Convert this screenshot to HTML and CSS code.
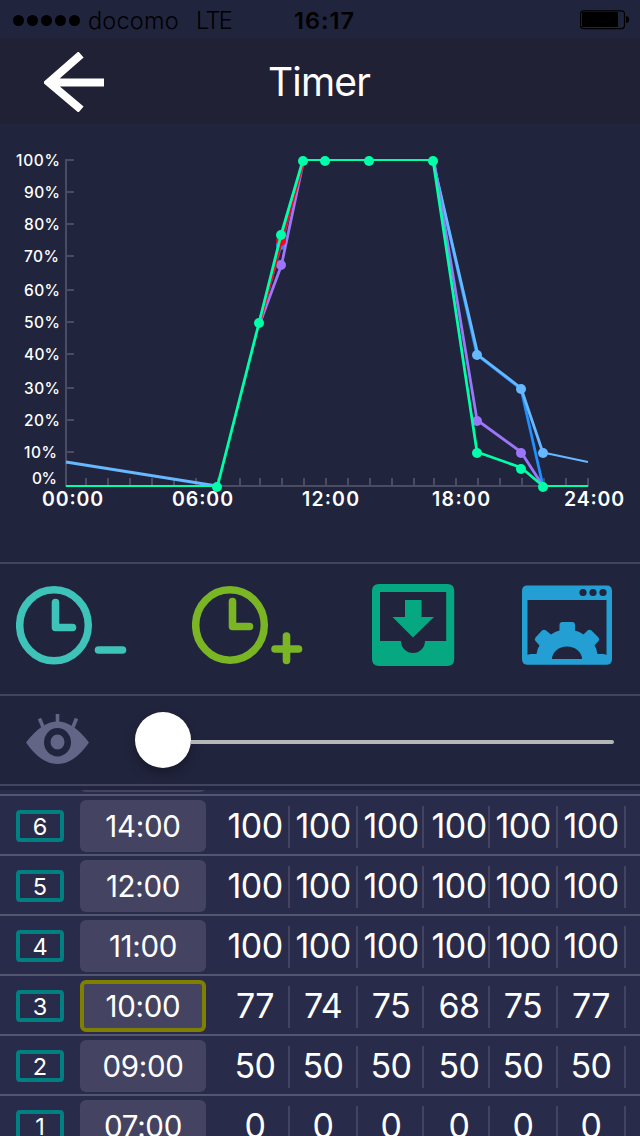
FILE: index.html
```html
<!DOCTYPE html>
<html>
<head>
<meta charset="utf-8">
<title>Timer</title>
<link rel="stylesheet" href="styles.css">
</head>
<body>

<div id="status">
    <div class="signal"><i></i><i></i><i></i><i></i><i></i></div>
    <span class="carrier">docomo</span>
    <span class="network">LTE</span>
    <b class="clock">16:17</b>
    <svg class="battery" width="50" height="20" viewBox="0 0 50 20">
        <rect x="0.5" y="0.8" width="44" height="17.8" rx="3" fill="none" stroke="#000" stroke-width="1.2"/>
        <rect x="2" y="2" width="36" height="15" rx="1"/>
        <path d="M46 6q3 0 3 3.5t-3 3.5z"/>
    </svg>
</div>

<header>
    <svg class="back" width="60" height="60" viewBox="0 0 60 60">
        <path d="M60 30.500H6M37 2.500L5 30.500L37 57.500" fill="none" stroke="#FFF" stroke-width="8"/>
    </svg>
    <h1>Timer</h1>
</header>

<svg class="chart" width="640" height="438" viewBox="0 124 640 438">
    <path class="axis" d="M66 159V487M65 486H589"/>
    <path class="axis" d="M66 160h8M66 192h8M66 224h8M66 256h8M66 290h8M66 322h8M66 354h8M66 388h8M66 420h8M66 452h8"/>
    <path class="axis" d="M86 478v8M108 478v8M130 478v8M152 478v8M174 478v8M196 478v8M218 478v8M240 478v8M260 478v8M282 478v8M304 478v8M326 478v8M348 478v8M370 478v8M392 478v8M414 478v8M434 478v8M456 478v8M478 478v8M500 478v8M522 478v8M544 478v8M566 478v8M588 478v8"/>

    <g class="ylabel">
        <text x="16" y="166" textLength="44">100%</text>
        <text x="24" y="198" textLength="36">90%</text>
        <text x="24" y="230" textLength="36">80%</text>
        <text x="24" y="262" textLength="35">70%</text>
        <text x="24" y="296" textLength="36">60%</text>
        <text x="24" y="328" textLength="36">50%</text>
        <text x="24" y="360" textLength="36">40%</text>
        <text x="24" y="394" textLength="36">30%</text>
        <text x="24" y="426" textLength="36">20%</text>
        <text x="24" y="458" textLength="33">10%</text>
        <text x="32" y="484" textLength="25">0%</text>
    </g>
    <g class="xlabel">
        <text x="42" y="506" textLength="61">00:00</text>
        <text x="172" y="506" textLength="61">06:00</text>
        <text x="302" y="506" textLength="57">12:00</text>
        <text x="432" y="506" textLength="58">18:00</text>
        <text x="564" y="506" textLength="60">24:00</text>
    </g>

    <g class="line blue">
        <path d="M259 323L281 245L303 161M433 161L477 355L521 389L543 486"/>
        <circle cx="281" cy="245" r="5"/>
    </g>
    <g class="line sky">
        <path d="M66 462L217 486M433 161L478 355L521 388L543 453"/>
        <path class="thin" d="M543 452.500L588 462"/>
        <circle cx="477" cy="355" r="5"/><circle cx="521" cy="389" r="5"/><circle cx="543" cy="453" r="5"/>
    </g>
    <g class="line violet">
        <path d="M260 323L281.500 265L303.500 161M434 161L477 420L521 452L543 486"/>
        <circle cx="281" cy="265" r="5"/><circle cx="477" cy="421" r="5"/><circle cx="521" cy="453" r="5"/>
    </g>
    <g class="line red">
        <path class="thin" d="M260 323L282 241L303 165"/>
        <circle cx="281" cy="241" r="5"/>
    </g>
    <g class="line green">
        <path d="M217.500 486L259 323L281 235L303 160M433 160L477 452L521 467.500L543 486"/>
        <path class="thin" d="M66 486H217M303 160H433M543 486H588"/>
        <circle cx="217" cy="487" r="5"/><circle cx="259" cy="323" r="5"/><circle cx="281" cy="235" r="5"/>
        <circle cx="303" cy="161" r="5"/><circle cx="325" cy="161" r="5"/><circle cx="369" cy="161" r="5"/>
        <circle cx="433" cy="161" r="5"/><circle cx="477" cy="453" r="5"/><circle cx="521" cy="469" r="5"/>
        <circle cx="543" cy="487" r="5"/>
    </g>
</svg>

<div id="tools">
    <!-- remove time -->
    <svg width="176" height="84" viewBox="0 0 176 84">
        <g fill="none" stroke="#3EC3B8" stroke-width="7.500" stroke-linecap="round" stroke-linejoin="round">
            <ellipse cx="38" cy="42.300" rx="34.300" ry="35.500"/>
            <path d="M39.500 19.500V44.500H56.500M82.500 67H106.500" stroke-width="7.600"/>
        </g>
    </svg>
    <!-- add time -->
    <svg width="180" height="84" viewBox="0 0 180 84">
        <g fill="none" stroke="#7AB524" stroke-width="7.500" stroke-linecap="round" stroke-linejoin="round">
            <ellipse cx="38" cy="42" rx="34.300" ry="35.200"/>
            <path d="M40.500 18.500V43.500H57.500M83 66H106.500M94.500 53V77.500" stroke-width="7.600"/>
        </g>
    </svg>
    <!-- save -->
    <svg width="150" height="84" viewBox="0 0 150 84">
        <path fill="#05A880" fill-rule="evenodd" d="M7 1H75.500Q82.200 1 82.200 8V76Q82.200 83 75.500 83H7Q0 83 0 76V8Q0 1 7 1ZM8 9V58H29A12 12 0 0 0 53 58H74.200V9Z"/>
        <path fill="#05A880" d="M33 17H49.500V34H62L41 54.500L20.500 34H33Z"/>
    </svg>
    <!-- settings -->
    <svg width="90" height="84" viewBox="0 0 90 84">
        <path fill="#239FD4" fill-rule="evenodd" d="M5 2.500H85Q90 2.500 90 8V76Q90 81.700 85 81.700H5Q0 81.700 0 76V8Q0 2.500 5 2.500ZM5.500 17V72Q7 71 9 71H14.500Q15 66 17.500 62.500L13.500 58Q12 56.500 13.500 54.500L20 47.500Q22 45.800 24 47.500L29 51.500Q33 48.500 37.500 47.500V42Q37.500 39 40.500 39H50Q53 39 53 42V47.500Q57.500 48.500 61.500 51.500L65.500 47.500Q67.500 45.800 69.500 47.500L76.500 54.500Q78 56.500 76.500 58L72.500 62.500Q75 66 75.500 71H81Q83 71 84.500 72V17ZM30 76H60A15 12.500 0 0 0 30 76Z"/>
        <g fill="#21243D"><circle cx="61" cy="9.500" r="3.600"/><circle cx="71" cy="9.500" r="3.600"/><circle cx="81" cy="9.500" r="3.600"/></g>
    </svg>
</div>

<div id="preview">
    <svg class="eye" width="64" height="52" viewBox="0 0 64 52">
        <path fill="#636587" fill-rule="evenodd" d="M0 28.500Q16 7.500 31.500 7.500T63 28.500Q48 50 31.500 50T0 28.500ZM31.500 14A13.500 14.200 0 1 0 31.500 42.400A13.500 14.200 0 1 0 31.500 14Z"/>
        <ellipse cx="31.500" cy="28" rx="7" ry="7.500" fill="#636587"/>
        <path d="M31.500 0V9M13.500 4.500L17 13M50.500 4.500L47 13" fill="none" stroke="#636587" stroke-width="3.600"/>
    </svg>
    <div class="slider"><div class="knob"></div><div class="track"></div></div>
</div>

<div id="list">
    <div class="row"><span class="time"></span></div>
    <div class="row">
        <span class="num">6</span><span class="time">14:00</span>
        <ol><li>100</li><li>100</li><li>100</li><li>100</li><li>100</li><li>100</li></ol>
    </div>
    <div class="row">
        <span class="num">5</span><span class="time">12:00</span>
        <ol><li>100</li><li>100</li><li>100</li><li>100</li><li>100</li><li>100</li></ol>
    </div>
    <div class="row">
        <span class="num">4</span><span class="time">11:00</span>
        <ol><li>100</li><li>100</li><li>100</li><li>100</li><li>100</li><li>100</li></ol>
    </div>
    <div class="row">
        <span class="num">3</span><span class="time on">10:00</span>
        <ol><li>77</li><li>74</li><li>75</li><li>68</li><li>75</li><li>77</li></ol>
    </div>
    <div class="row">
        <span class="num">2</span><span class="time">09:00</span>
        <ol><li>50</li><li>50</li><li>50</li><li>50</li><li>50</li><li>50</li></ol>
    </div>
    <div class="row">
        <span class="num">1</span><span class="time">07:00</span>
        <ol><li>0</li><li>0</li><li>0</li><li>0</li><li>0</li><li>0</li></ol>
    </div>
</div>

</body>
</html>
```
FILE: styles.css
```css
* { box-sizing: border-box; }
html, body { margin: 0; padding: 0; background-color: #21243D; color: #FFF; font-family: Inter, 'Liberation Sans', sans-serif; }
body { display: flex; flex-direction: column; width: 640px; height: 1136px; overflow: hidden; }
svg  { display: block; flex: none; }

/* Status bar */
#status  { display: flex; align-items: center; flex: none; height: 38px; padding: 3px 0 0 13px; color: #000; font-size: 23.500px; line-height: 38px; }
.signal  { display: flex; gap: 3px; }
.signal i { width: 11px; height: 11px; border-radius: 50%; background-color: #000; }
.carrier { width: 116px; padding-left: 8px; font-weight: 300; letter-spacing: 0.2px; }
.network { width: 98px; font-weight: 300; letter-spacing: -1.6px; }
.clock   { width: 286px; font-weight: 600; font-size: 23.500px; letter-spacing: 1px; }
.battery { margin-top: -1px; }

header { display: flex; align-items: center; flex: none; height: 86px; padding-left: 44px; background-color: #212136; }
.back  { margin-top: 2px; }
header h1 { width: 430px; margin: 0; text-align: center; font-weight: 400; font-size: 39px; letter-spacing: -0.8px; }

/* Chart */
.axis { fill: none; stroke: #4B4C64; stroke-width: 2; }
.ylabel { fill: #FFF; font-size: 15.500px; font-weight: 500; }
.xlabel { fill: #FFF; font-size: 19.500px; font-weight: 600; }
.line path  { fill: none; stroke-width: 2.800; stroke-linejoin: round; }
.line .thin { stroke-width: 2; }
.blue   { fill: #1E90FF; stroke: #1E90FF; }
.sky    { fill: #66B8FF; stroke: #66B8FF; }
.red    { fill: #FF0018; stroke: #FF0018; }
.violet { fill: #9B76FA; stroke: #9B76FA; }
.green  { fill: #00FFA8; stroke: #00FFA8; }
.line circle { stroke: none; }

#tools { display: flex; flex: none; height: 132px; padding: 19px 28px 0 16px; border-top: 2px solid #444462; }

/* Slider */
#preview { display: flex; flex: none; height: 92px; padding: 18px 26px 0; border-top: 2px solid #444462; border-bottom: 2px solid #444462; }
.slider  { display: flex; align-items: center; width: 479px; height: 56px; margin: -2px 0 0 45px; }
.knob    { flex: none; width: 56px; height: 56px; border-radius: 50%; background-color: #FFF; box-shadow: 0 5px 12px rgba(0,0,0,.3); }
.track   { flex: 1; height: 4px; margin-top: 4px; border-radius: 0 2px 2px 0; background-color: #B5B6B7; }

/* Time table */
#list { flex: 1; min-height: 0; margin-top: 4px; overflow: hidden; background-color: #282B4A; }
.row  { display: flex; align-items: flex-start; height: 60px; padding: 4px 0 0 16px; border-bottom: 2px solid #54566F; }
.row:first-child { margin-top: -54px; padding-left: 80px; }
.num  { width: 48px; height: 32px; margin: 10px 16px 0 0; border: 4px solid #008080; border-radius: 4px; text-align: center; font-size: 23.500px; line-height: 26px; }
.time { width: 126px; height: 52px; border-radius: 6px; background-color: #444462; text-align: center; font-size: 29.500px; line-height: 52px; letter-spacing: -0.3px; }
.time.on { border: 4px solid #808000; line-height: 44px; }
ol    { display: flex; margin: 6px 0 0 16px; padding: 0; list-style: none; }
li    { width: 68px; height: 42px; border-right: 2px solid #444462; text-align: center; font-size: 34px; line-height: 39px; letter-spacing: -0.5px; }
li:nth-child(3), li:nth-child(4) { width: 66px; padding-left: 2px; }
li:nth-child(4) { padding-left: 6px; }
```
